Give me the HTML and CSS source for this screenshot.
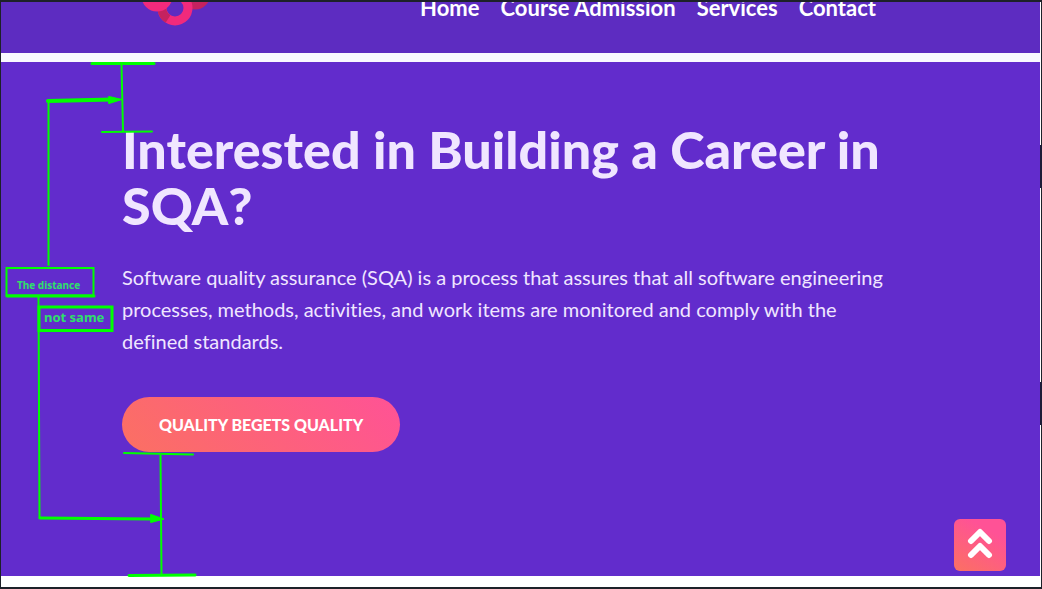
FILE: index.html
```html
<!DOCTYPE html>
<html lang="en">
<head>
<meta charset="utf-8">
<title>SQA Career</title>
<link rel="stylesheet" href="styles.css">
</head>
<body>
<div class="page">
  <header class="site-header">
    <a class="logo" href="#" aria-label="Home page">
      <svg width="72" height="26" viewBox="138 2 72 26" fill="none" stroke-width="9">
        <circle cx="157" cy="-6" r="11" stroke="#f12a7c"/>
        <circle cx="195" cy="-6" r="11" stroke="#c5225f"/>
        <circle cx="175" cy="8" r="13" stroke="#f12a7c"/>
        <path d="M162 9A13 13 0 0 0 168 19" stroke="#c5225f"/>
        <path d="M146 -4A11 11 0 0 0 168 -4" stroke="#f12a7c"/>
      </svg>
    </a>
    <nav class="nav">
      <a href="#">Home</a>
      <a href="#">Course Admission</a>
      <a href="#">Services</a>
      <a href="#">Contact</a>
    </nav>
  </header>
  <main class="hero">
    <h1 class="title">Interested in Building a Career in<br>SQA?</h1>
    <p class="lead">Software quality assurance (SQA) is a process that assures that all software engineering<br>processes, methods, activities, and work items are monitored and comply with the<br>defined standards.</p>
    <a class="cta" href="#">QUALITY BEGETS QUALITY</a>
    <button class="to-top" type="button" aria-label="Back to top">
      <svg width="26" height="32" viewBox="0 0 26 32" fill="none" stroke="#fff" stroke-width="6" stroke-linecap="round" stroke-linejoin="round"><path d="M4 14l9-9 9 9M4 28l9-9 9 9"/></svg>
    </button>
  </main>
</div>
<svg class="notes" width="200" height="589" viewBox="0 0 200 589" fill="none" stroke="#00ff00" stroke-width="2" stroke-linecap="round">
  <path d="M92 63.500H154" stroke-width="3"/>
  <path d="M121.500 64L123 131M102 132L152 131.500M48.500 265V101"/>
  <path d="M48 101L112 99.500" stroke-width="4"/>
  <path d="M109 96.500L122 99.500L109 103.500Z" fill="#00ff00" stroke-width="1"/>
  <path d="M6.500 268H93.500V295.500H6.500Z"/>
  <path d="M7 296H94" stroke-width="3"/>
  <path d="M39 307H112V330.500H39Z" stroke-width="3"/>
  <path d="M38.500 297L39.500 518M124 453L193 454.500M160.500 455L161.500 575"/>
  <path d="M40 518L152 519" stroke-width="3"/>
  <path d="M151 514.500L164 519L151 522.500Z" fill="#00ff00" stroke-width="1"/>
  <path d="M129 575.500L195 575" stroke-width="3"/>
  <text class="note-small" x="17" y="289">The distance</text>
  <text class="note-large" x="44" y="322">not same</text>
</svg>
<i class="edge-mark edge-mark-upper"></i>
<i class="edge-mark edge-mark-lower"></i>
</body>
</html>
```
FILE: styles.css
```css
* { box-sizing: border-box; }
body {
  margin: 0;
  font-family: Lato, "Open Sans", sans-serif;
  font-variant-ligatures: none;
  color: #f0e6ff;
  background: #fff;
}
.page {
  min-height: 100vh;
  border: solid #1d2129;
  border-width: 2px 1px;
  display: flex;
  flex-direction: column;
  padding: 0 1px 11px 0;
  background: #fff;
}
.site-header {
  display: flex;
  align-items: flex-start;
  justify-content: space-between;
  overflow: hidden;
  padding: 0 164px 25px 137px;
  border-bottom: 9px solid #f9f9ff;
  background: #5d2cc1;
}
.logo { display: block; height: 26px; }
.logo svg { display: block; }
.nav {
  display: flex;
  gap: 21px;
  line-height: 12px;
  font-size: 22px;
  font-weight: 700;
}
.nav a { color: #fff; text-decoration: none; white-space: nowrap; }
.hero {
  flex: 1;
  position: relative;
  padding: 59px 120px 0 121px;
  background: #622ccc;
}
.title {
  margin: 0;
  font-size: 52px;
  line-height: 56px;
  font-weight: 900;
  white-space: nowrap;
}
.lead {
  margin: 28px 0 40px;
  font-size: 20px;
  line-height: 32px;
  white-space: nowrap;
}
.cta {
  display: inline-block;
  padding: 0 37px;
  border-radius: 28px;
  font-size: 16px;
  line-height: 55px;
  font-weight: 900;
  color: #fff;
  text-decoration: none;
  background: linear-gradient(45deg, #fb7062, #ff5296);
}
.to-top {
  position: absolute;
  right: 34px;
  bottom: 5px;
  display: flex;
  align-items: center;
  justify-content: center;
  width: 52px;
  height: 52px;
  padding: 0 0 4px;
  border: 0;
  border-radius: 6px;
  background: linear-gradient(30deg, #fb7062, #ff5296 75%);
}
.notes { position: absolute; left: 0; top: 0; pointer-events: none; }
.notes text { fill: #2fe06a; stroke: none; font-family: "Noto Sans", sans-serif; font-weight: 700; }
.note-small { font-size: 10px; }
.note-large { font-size: 13px; }
.edge-mark { position: absolute; right: 0; width: 2px; height: 43px; background: #1d1d38; }
.edge-mark-upper { top: 145px; }
.edge-mark-lower { top: 382px; }
```
